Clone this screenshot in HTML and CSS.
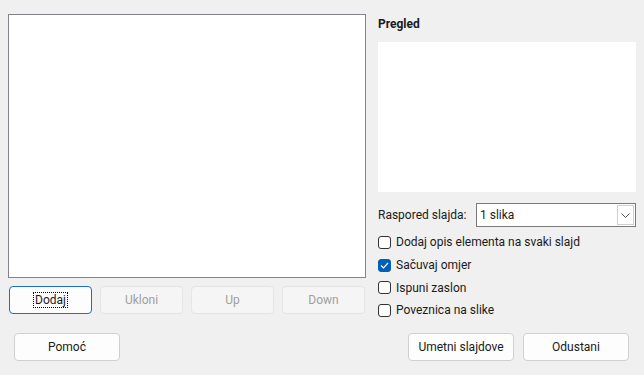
FILE: index.html
```html
<!DOCTYPE html>
<html lang="hr">

<head>
    <meta charset="UTF-8">
    <title>Fotoalbum</title>
    <link rel="stylesheet" href="styles.css">
</head>

<body>
    <div class="dialog">
        <div class="main">
            <div class="left">
                <div class="listbox"></div>
                <div class="list-buttons">
                    <button class="btn focused"><span>Dodaj</span></button>
                    <button class="btn" disabled>Ukloni</button>
                    <button class="btn" disabled>Up</button>
                    <button class="btn" disabled>Down</button>
                </div>
            </div>

            <div class="right">
                <h3 class="title">Pregled</h3>
                <div class="preview"></div>

                <div class="layout-row">
                    <label class="layout-label">Raspored slajda:</label>
                    <div class="combo">
                        <span class="combo-value">1 slika</span>
                        <span class="combo-arrow">
                            <svg width="9" height="5" viewBox="0 0 9 5">
                                <path d="M0.5 0.5 L4.5 4.5 L8.5 0.5" fill="none" stroke="#555" stroke-width="1"/>
                            </svg>
                        </span>
                    </div>
                </div>

                <ul class="options">
                    <li><span class="check"></span>Dodaj opis elementa na svaki slajd</li>
                    <li><span class="check checked">
                        <svg width="9" height="7" viewBox="0 0 9 7">
                            <path d="M1 3.5 L3.5 6 L8 1" fill="none" stroke="#fff" stroke-width="1.2"/>
                        </svg>
                    </span>Sačuvaj omjer</li>
                    <li><span class="check"></span>Ispuni zaslon</li>
                    <li><span class="check"></span>Poveznica na slike</li>
                </ul>
            </div>
        </div>

        <div class="footer">
            <button class="btn wide">Pomoć</button>
            <div class="footer-right">
                <button class="btn wide">Umetni slajdove</button>
                <button class="btn wide">Odustani</button>
            </div>
        </div>
    </div>
</body>

</html>
```

FILE: styles.css
```css
body {
    margin: 0;
    padding: 0;
    background-color: #f0f0f0;
    font-family: Roboto, "Noto Sans", sans-serif;
    font-size: 12px;
    color: #1a1a1a;
}

.dialog {
    width: 644px;
    height: 375px;
}

.main {
    display: flex;
    align-items: flex-start;
    gap: 12px;
    height: 314px;
    box-sizing: border-box;
    padding: 14px 8px 0 8px;
}

.left {
    flex: none;
    width: 358px;
}

.listbox {
    height: 262px;
    background-color: #fff;
    border: 1px solid #83848a;
}

.list-buttons {
    display: flex;
    gap: 8px;
    margin-top: 8px;
    padding-left: 1px;
}

.btn {
    font-family: inherit;
    font-size: 12px;
    color: #1a1a1a;
    width: 83px;
    height: 28px;
    padding: 0;
    background-color: #fdfdfd;
    border: 1px solid #d0d0d0;
    border-radius: 4px;
}

.btn:disabled {
    color: #a0a0a0;
    background-color: #f5f5f5;
    border-color: #e5e5e5;
}

.btn.focused {
    border-color: #1a6fc4;
}

.btn.focused span {
    outline: 1px dotted #000;
    padding: 0 1px;
}

.right {
    flex: none;
    width: 258px;
}

.title {
    font-size: 12px;
    font-weight: bold;
    margin: 2px 0 0 0;
    height: 26px;
    line-height: 16px;
}

.preview {
    height: 150px;
    background-color: #fff;
}

.layout-row {
    display: flex;
    align-items: center;
    margin-top: 11px;
}

.layout-label {
    width: 98px;
}

.combo {
    flex: 1;
    height: 22px;
    display: flex;
    align-items: center;
    background-color: #fff;
    border: 1px solid #7a7a7a;
}

.combo-value {
    flex: 1;
    padding-left: 3px;
}

.combo-arrow {
    width: 17px;
    height: 20px;
    margin-right: 1px;
    display: flex;
    align-items: center;
    justify-content: center;
    border: 1px solid #cfcfcf;
    box-sizing: border-box;
}

.options {
    list-style: none;
    margin: 4px 0 0 0;
    padding: 0;
}

.options li {
    display: flex;
    align-items: center;
    height: 22.7px;
}

.check {
    width: 11px;
    height: 11px;
    border: 1px solid #333;
    border-radius: 3px;
    background-color: #fff;
    margin-right: 5px;
    display: flex;
    align-items: center;
    justify-content: center;
}

.check.checked {
    background-color: #005fb8;
    border-color: #005fb8;
}

.footer {
    display: flex;
    justify-content: space-between;
    padding: 19px 15px 0 14px;
}

.footer-right {
    display: flex;
    gap: 9px;
}

.btn.wide {
    width: 106px;
}
```
